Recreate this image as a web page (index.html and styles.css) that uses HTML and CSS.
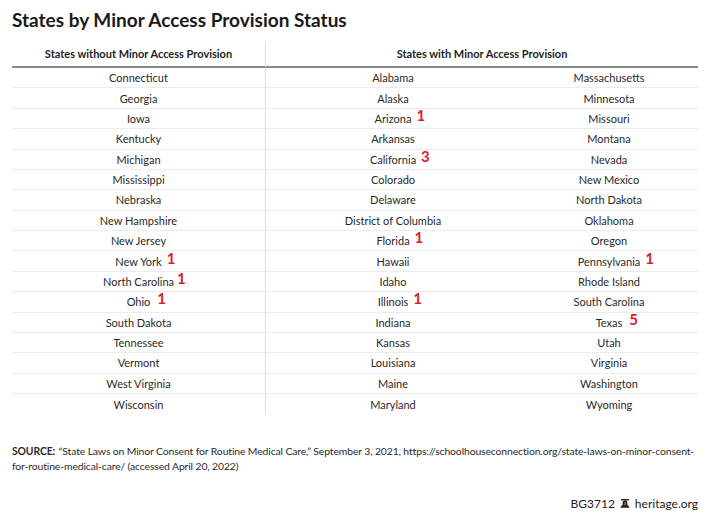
FILE: index.html
```html
<!DOCTYPE html>
<html>
<head>
<meta charset="utf-8">
<link rel="stylesheet" href="styles.css">
</head>
<body>
<div class="page">
  <h1 class="title">States by Minor Access Provision Status</h1>
  <div class="table">
    <div class="hcell col1">States without Minor Access Provision</div>
    <div class="hcell span2">States with Minor Access Provision</div>

    <div class="cell col1"><span>Connecticut</span></div><div class="cell"><span>Alabama</span></div><div class="cell col3"><span>Massachusetts</span></div>
    <div class="cell col1"><span>Georgia</span></div><div class="cell"><span>Alaska</span></div><div class="cell col3"><span>Minnesota</span></div>
    <div class="cell col1"><span>Iowa</span></div><div class="cell"><span>Arizona<b class="fn">1</b></span></div><div class="cell col3"><span>Missouri</span></div>
    <div class="cell col1"><span>Kentucky</span></div><div class="cell"><span>Arkansas</span></div><div class="cell col3"><span>Montana</span></div>
    <div class="cell col1"><span>Michigan</span></div><div class="cell"><span>California<b class="fn">3</b></span></div><div class="cell col3"><span>Nevada</span></div>
    <div class="cell col1"><span>Mississippi</span></div><div class="cell"><span>Colorado</span></div><div class="cell col3"><span>New Mexico</span></div>
    <div class="cell col1"><span>Nebraska</span></div><div class="cell"><span>Delaware</span></div><div class="cell col3"><span>North Dakota</span></div>
    <div class="cell col1"><span>New Hampshire</span></div><div class="cell"><span>District of Columbia</span></div><div class="cell col3"><span>Oklahoma</span></div>
    <div class="cell col1"><span>New Jersey</span></div><div class="cell"><span>Florida<b class="fn">1</b></span></div><div class="cell col3"><span>Oregon</span></div>
    <div class="cell col1"><span>New York<b class="fn">1</b></span></div><div class="cell"><span>Hawaii</span></div><div class="cell col3"><span>Pennsylvania<b class="fn">1</b></span></div>
    <div class="cell col1"><span>North Carolina<b class="fn tight">1</b></span></div><div class="cell"><span>Idaho</span></div><div class="cell col3"><span>Rhode Island</span></div>
    <div class="cell col1"><span>Ohio<b class="fn wide">1</b></span></div><div class="cell"><span>Illinois<b class="fn">1</b></span></div><div class="cell col3"><span>South Carolina</span></div>
    <div class="cell col1"><span>South Dakota</span></div><div class="cell"><span>Indiana</span></div><div class="cell col3"><span>Texas<b class="fn wide">5</b></span></div>
    <div class="cell col1"><span>Tennessee</span></div><div class="cell"><span>Kansas</span></div><div class="cell col3"><span>Utah</span></div>
    <div class="cell col1"><span>Vermont</span></div><div class="cell"><span>Louisiana</span></div><div class="cell col3"><span>Virginia</span></div>
    <div class="cell col1"><span>West Virginia</span></div><div class="cell"><span>Maine</span></div><div class="cell col3"><span>Washington</span></div>
    <div class="cell col1 last"><span>Wisconsin</span></div><div class="cell last"><span>Maryland</span></div><div class="cell col3 last"><span>Wyoming</span></div>
  </div>
  <p class="source"><span class="line"><b>SOURCE:</b> “State Laws on Minor Consent for Routine Medical Care,” September 3, 2021, https://schoolhouseconnection.org/state-laws-on-minor-consent-</span><br>for-routine-medical-care/ (accessed April 20, 2022)</p>
  <div class="credit">
    <span>BG3712</span>
    <svg class="bell" viewBox="0 0 10 9" width="10" height="9">
      <rect x="1" y="0" width="8" height="1.4" fill="#222"/>
      <rect x="4.2" y="1.2" width="1.6" height="1" fill="#222"/>
      <path d="M2.9 2.1 L7.1 2.1 L7.5 6 L9.3 7.6 L9.3 8.8 L0.7 8.8 L0.7 7.6 L2.5 6 Z" fill="#222"/>
      <path d="M4.9 3 L5.3 4.5 L4.8 6.2" stroke="#fff" stroke-width="0.6" fill="none"/>
    </svg>
    <span>heritage.org</span>
  </div>
</div>
</body>
</html>
```

FILE: styles.css
```css
* { box-sizing: border-box; }
html, body { margin: 0; padding: 0; background: #fff; }
body { font-family: Lato, "Liberation Sans", sans-serif; color: #222; }
.page { width: 720px; height: 519px; padding: 8px 22px 0 12px; }
.title {
  margin: 0;
  font-size: 19px;
  line-height: 24px;
  font-weight: 700;
  color: #1a1a1a;
}
.table {
  margin-top: 10px;
  display: grid;
  grid-template-columns: 254px 254px 178px;
  width: 686px;
}
.hcell {
  height: 26px;
  border-bottom: 2px solid #8a8a8a;
  font-size: 11px;
  font-weight: 700;
  display: flex;
  align-items: center;
  justify-content: center;
  padding-bottom: 2px;
  color: #1e1e1e;
}
.span2 { grid-column: span 2; }
.col1 { border-right: 1px solid #dcdcdc; }
.cell {
  height: 20.375px;
  border-bottom: 1px solid #ececec;
  font-size: 11px;
  display: flex;
  align-items: center;
  justify-content: center;
  color: #2a2a2a;
}
.cell.last { border-bottom: none; }
.cell span { position: relative; }
.fn {
  position: absolute;
  left: 100%;
  top: -4px;
  margin-left: 5px;
  color: #d8232a;
  font-size: 15px;
  font-weight: 700;
  line-height: 1;
}
.fn.tight { margin-left: 3px; }
.fn.wide { margin-left: 7px; }
.source {
  margin: 30px 0 0;
  font-size: 10.4px;
  line-height: 15px;
  letter-spacing: -0.12px;
  color: #2a2a2a;
  width: 700px;
}
.source .line { white-space: nowrap; }
.source b { font-weight: 700; margin-right: 1px; }
.credit {
  margin-top: 22px;
  display: flex;
  justify-content: flex-end;
  align-items: center;
  gap: 5px;
  font-size: 12px;
  color: #222;
}
.bell { display: block; }
```
